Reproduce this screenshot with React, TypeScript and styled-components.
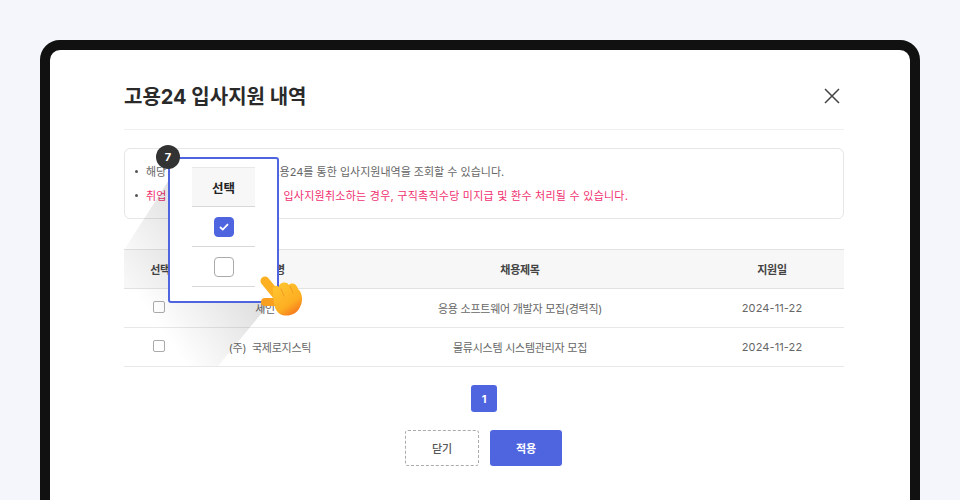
import React from 'react';
import styled, { createGlobalStyle } from 'styled-components';

const GlobalStyle = createGlobalStyle`
  html, body {
    margin: 0;
    padding: 0;
    height: 500px;
    overflow: hidden;
    background: #f4f6fb;
    font-family: Inter, "Noto Sans CJK KR", sans-serif;
  }
`;

const Page = styled.div`
  height: 500px;
  padding: 40px 40px 0;
  box-sizing: border-box;
  overflow: hidden;
`;

const Frame = styled.div`
  position: relative;
  height: 500px;
  box-sizing: border-box;
  padding: 0 66px 0 74px;
  background: #fff;
  border: 10px solid #111;
  border-radius: 20px;
`;

const Header = styled.div`
  display: flex;
  align-items: center;
  justify-content: space-between;
  height: 80px;
  padding-top: 12px;
  box-sizing: border-box;
  border-bottom: 1px solid #f0f0f0;
`;

const Title = styled.h1`
  margin: 0;
  font-size: 20px;
  font-weight: 700;
  color: #2a2a2a;
`;

const CloseButton = styled.button`
  display: flex;
  width: 16px;
  height: 16px;
  margin-right: 4px;
  padding: 0;
  border: 0;
  background: none;
`;

const Notice = styled.ul`
  margin: 18px 0 30px;
  padding: 13px 10px 0 21px;
  height: 71px;
  box-sizing: border-box;
  border: 1px solid #e6e6e6;
  border-radius: 6px;
  list-style: none;
`;

const NoticeItem = styled.li<{ $alert?: boolean }>`
  position: relative;
  height: 24px;
  line-height: 20px;
  white-space: pre;
  font-size: 11px;
  letter-spacing: ${props => (props.$alert ? '0.25px' : '0')};
  color: ${props => (props.$alert ? '#f0306f' : '#666')};

  &::before {
    content: '';
    position: absolute;
    left: -11px;
    top: 8px;
    width: 3px;
    height: 3px;
    border-radius: 50%;
    background: #555;
  }
`;

const Table = styled.table`
  width: 100%;
  border-collapse: collapse;
  table-layout: fixed;
  border-top: 1px solid #e2e2e2;

  th:nth-child(3),
  td:nth-child(3) {
    padding-right: 4px;
  }
`;

const HeadCell = styled.th<{ $width?: number }>`
  width: ${props => (props.$width ? `${props.$width}px` : 'auto')};
  height: 39px;
  padding: 0 0 1px;
  box-sizing: border-box;
  background: #f7f7f7;
  border-bottom: 1px solid #e2e2e2;
  font-size: 11px;
  font-weight: 700;
  letter-spacing: -0.3px;
  color: #444;
`;

const Cell = styled.td`
  height: 39px;
  padding: 0 0 1px;
  box-sizing: border-box;
  border-bottom: 1px solid #e8e8e8;
  text-align: center;
  white-space: pre;
  font-size: 11px;
  letter-spacing: -0.25px;
  color: #666;
`;

const DateCell = styled(Cell)`
  letter-spacing: 0.1px;
`;

const CheckBox = styled.span<{ $size?: number; $checked?: boolean }>`
  display: inline-flex;
  align-items: center;
  justify-content: center;
  vertical-align: middle;
  width: ${props => props.$size ?? 12}px;
  height: ${props => props.$size ?? 12}px;
  box-sizing: border-box;
  border: 1px solid ${props => (props.$checked ? '#4f65e0' : '#aaa')};
  border-radius: ${props => ((props.$size ?? 12) > 12 ? 4 : 2)}px;
  background: ${props => (props.$checked ? '#4f65e0' : '#fff')};
`;

const RowCheck = styled(CheckBox)`
  margin: -4px 0 0 -2px;
`;

const Pagination = styled.div`
  display: flex;
  justify-content: center;
  margin-top: 18px;
`;

const PageButton = styled.button`
  width: 26px;
  height: 27px;
  padding: 0;
  border: 0;
  border-radius: 3px;
  background: #4f65e0;
  color: #fff;
  font-family: inherit;
  font-size: 11px;
  font-weight: 700;
`;

const Actions = styled.div`
  display: flex;
  justify-content: center;
  gap: 11px;
  margin-top: 18px;
  padding-right: 1px;
`;

const ActionButton = styled.button<{ $primary?: boolean }>`
  width: ${props => (props.$primary ? 72 : 74)}px;
  height: 36px;
  padding: 0;
  box-sizing: border-box;
  border: ${props => (props.$primary ? '0' : '1px dashed #aaa')};
  border-radius: 3px;
  background: ${props => (props.$primary ? '#4f65e0' : '#fff')};
  color: ${props => (props.$primary ? '#fff' : '#555')};
  font-family: inherit;
  font-size: 11px;
  font-weight: ${props => (props.$primary ? 700 : 500)};
`;

const LongShadow = styled.svg`
  position: absolute;
  left: 64px;
  top: 100px;
  pointer-events: none;
`;

const Popover = styled.div`
  position: absolute;
  left: 118px;
  top: 107px;
  width: 111px;
  height: 146px;
  box-sizing: border-box;
  padding: 8px 22px 0;
  background: #fff;
  border: 2px solid #4f65e0;
  border-radius: 3px;
`;

const PopoverHead = styled.div`
  height: 40px;
  display: flex;
  align-items: center;
  justify-content: center;
  box-sizing: border-box;
  background: #f7f7f7;
  border-top: 1px solid #e8e8e8;
  border-bottom: 1px solid #d8d8d8;
  font-size: 12.5px;
  font-weight: 700;
  color: #222;
`;

const PopoverRow = styled.div`
  height: 40px;
  display: flex;
  align-items: center;
  justify-content: center;
  box-sizing: border-box;
  border-bottom: 1px solid #d8d8d8;
`;

const StepBadge = styled.span`
  position: absolute;
  left: 106px;
  top: 95px;
  width: 24px;
  height: 24px;
  display: flex;
  align-items: center;
  justify-content: center;
  border-radius: 50%;
  background: #333;
  color: #fff;
  font-size: 11px;
  font-weight: 700;
`;

const Hand = styled.svg`
  position: absolute;
  left: 195px;
  top: 215px;
`;

const rows = [
  { company: '세인텍', title: '응용 소프트웨어 개발자 모집(경력직)', date: '2024-11-22' },
  { company: '(주)  국제로지스틱', title: '물류시스템 시스템관리자 모집', date: '2024-11-22' },
];

export default function App() {
  return (
    <Page>
      <GlobalStyle />
      <Frame>
        <Header>
          <Title>고용24 입사지원 내역</Title>
          <CloseButton aria-label="닫기">
            <svg width="16" height="16" viewBox="0 0 16 16" fill="none" stroke="#444" strokeWidth="1.5">
              <path d="M1 1l14 14M15 1L1 15" />
            </svg>
          </CloseButton>
        </Header>

        <Notice>
          <NoticeItem>해당 화면에서 최근 6 개월 고용24를 통한 입사지원내역을 조회할 수 있습니다.</NoticeItem>
          <NoticeItem $alert>취업 사실을 숨기고 임의로    입사지원취소하는 경우, 구직촉직수당 미지급 및 환수 처리될 수 있습니다.</NoticeItem>
        </Notice>

        <Table>
          <thead>
            <tr>
              <HeadCell $width={72}>선택</HeadCell>
              <HeadCell $width={148}>기업명</HeadCell>
              <HeadCell>채용제목</HeadCell>
              <HeadCell $width={144}>지원일</HeadCell>
            </tr>
          </thead>
          <tbody>
            {rows.map((row, idx) => (
              <tr key={idx}>
                <Cell>
                  <RowCheck />
                </Cell>
                <Cell>{row.company}</Cell>
                <Cell>{row.title}</Cell>
                <DateCell>{row.date}</DateCell>
              </tr>
            ))}
          </tbody>
        </Table>

        <Pagination>
          <PageButton>1</PageButton>
        </Pagination>

        <Actions>
          <ActionButton>닫기</ActionButton>
          <ActionButton $primary>적용</ActionButton>
        </Actions>

        <LongShadow width="160" height="217" viewBox="0 0 160 217">
          <defs>
            <linearGradient id="longShadow" x1="1" y1="0.25" x2="0.2" y2="1">
              <stop offset="0" stopColor="#000" stopOpacity="0.2" />
              <stop offset="0.85" stopColor="#000" stopOpacity="0" />
            </linearGradient>
          </defs>
          <path d="M60 22L10 100V216H104L156 153Z" fill="url(#longShadow)" />
        </LongShadow>

        <Popover>
          <PopoverHead>선택</PopoverHead>
          <PopoverRow>
            <CheckBox $size={20} $checked>
              <svg width="10" height="8" viewBox="0 0 10 8" fill="none" stroke="#fff" strokeWidth="1.8">
                <path d="M1 4l2.8 2.6L9 1.2" />
              </svg>
            </CheckBox>
          </PopoverRow>
          <PopoverRow>
            <CheckBox $size={20} />
          </PopoverRow>
        </Popover>

        <StepBadge>7</StepBadge>

        <Hand width="70" height="60" viewBox="0 0 70 60">
          <defs>
            <linearGradient id="handFill" x1="0.25" y1="0.1" x2="0.8" y2="1">
              <stop offset="0" stopColor="#ffc22e" />
              <stop offset="0.6" stopColor="#fdae22" />
              <stop offset="1" stopColor="#f4701c" />
            </linearGradient>
          </defs>
          <path d="M20 16L38 38" stroke="#fdb022" strokeWidth="9" strokeLinecap="round" fill="none" />
          <path d="M20 37H34" stroke="#f9a01f" strokeWidth="8" strokeLinecap="round" fill="none" />
          <path
            d="M28 26c-1-4 3-7 6-4 0-5 8-6 10-2 3-3 8-1 9 4 5 4 5 13 2 18-3 7-11 10-18 8-6-2-9-9-9-24z"
            fill="url(#handFill)"
          />
          <path d="M36 24l3 7M45 21l3 7" stroke="#f59a28" strokeWidth="1" strokeLinecap="round" fill="none" />
        </Hand>
      </Frame>
    </Page>
  );
}
